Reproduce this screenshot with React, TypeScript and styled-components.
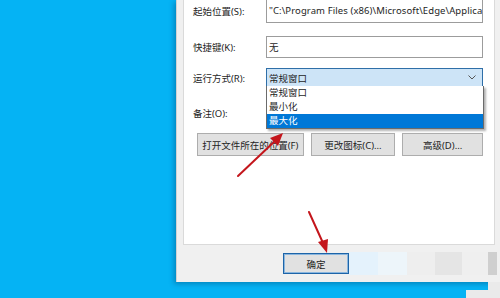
import React from 'react';
import styled, { createGlobalStyle } from 'styled-components';

// Ausschnitt eines Windows-Eigenschaften-Dialogs mit aufgeklapptem Combo

const GlobalStyle = createGlobalStyle`
  html, body { margin: 0; padding: 0; }
  body {
    font-family: "Noto Sans", "Noto Sans CJK SC", sans-serif;
    color: #1e1e1e;
  }
`;

const Desktop = styled.div`
  position: relative;
  width: 500px;
  height: 298px;
  overflow: hidden;
  background: #05b3f4;
  display: flex;
  align-items: flex-start;
`;

const Window = styled.div`
  margin-left: 176px;
  flex-shrink: 0;
  width: 330px;
  height: 282px;
  box-sizing: border-box;
  background: #f0f0f0;
  border-left: 1px solid #d2d2d2;
  box-shadow: -2px 2px 5px rgba(0, 50, 90, 0.35);
  display: flex;
  flex-direction: column;
`;

const Panel = styled.div`
  margin-left: 6px;
  width: 312px;
  height: 245px;
  box-sizing: border-box;
  background: #ffffff;
  border: 1px solid #dadada;
  border-top: none;
  padding: 0 11px 0 9px;
`;

const Form = styled.div`
  display: flex;
  flex-direction: column;
  margin-top: -2px;
`;

const Row = styled.div<{ $mt?: number }>`
  display: flex;
  align-items: center;
  margin-top: ${(p) => p.$mt ?? 0}px;
`;

const Label = styled.div`
  width: 73px;
  font-size: 9.5px;
  white-space: nowrap;
`;

const Field = styled.div<{ $h: number }>`
  position: relative;
  width: 217px;
  height: ${(p) => p.$h}px;
  box-sizing: border-box;
  border: 1px solid #9c9c9c;
  background: #fff;
  padding-left: 2px;
  display: flex;
  align-items: center;
  font-size: 9.5px;
  letter-spacing: 0.1px;
  white-space: nowrap;
  overflow: hidden;
`;

const Combo = styled.div`
  position: relative;
  width: 217px;
  height: 19px;
  box-sizing: border-box;
  border: 1px solid #2f6fa8;
  background: #cde4f7;
  padding: 0 6px 0 2px;
  display: flex;
  align-items: center;
  justify-content: space-between;
  font-size: 9.5px;
`;

const DropList = styled.div`
  position: absolute;
  top: 100%;
  left: -1px;
  width: 218px;
  box-sizing: border-box;
  border: 1px solid #6b6b6b;
  border-top: none;
  background: #fff;
  box-shadow: 2px 2px 2px rgba(0, 0, 0, 0.3);
  z-index: 2;
`;

const Option = styled.div<{ $active?: boolean }>`
  height: 14px;
  line-height: 14px;
  padding-left: 2px;
  font-size: 9.5px;
  background: ${(p) => (p.$active ? '#0078d7' : 'transparent')};
  color: ${(p) => (p.$active ? '#ffffff' : '#1e1e1e')};
`;

const ButtonRow = styled.div`
  display: flex;
  gap: 7px;
  margin-top: 9px;
  padding-left: 4px;
`;

const Button = styled.div<{ $w: number }>`
  width: ${(p) => p.$w}px;
  height: 23px;
  box-sizing: border-box;
  border: 1px solid #adadad;
  background: #e1e1e1;
  display: flex;
  align-items: center;
  justify-content: center;
  font-size: 9.5px;
  white-space: nowrap;
`;

const Footer = styled.div`
  display: flex;
  align-items: center;
  height: 37px;
  padding-left: 106px;
`;

const OkButton = styled.div`
  width: 66px;
  height: 21px;
  box-sizing: border-box;
  border: 1px solid #1d64a8;
  box-shadow: inset 0 0 0 1px #8ab6de;
  background: #e1e1e1;
  display: flex;
  align-items: center;
  justify-content: center;
  font-size: 9.5px;
`;

const Mosaic = styled.div`
  display: flex;
  height: 23px;
`;

const Patch = styled.div<{ $w: number; $c: string }>`
  width: ${(p) => p.$w}px;
  background: ${(p) => p.$c};
`;

const BehindWindow = styled.div<{ $l: number; $t: number }>`
  position: absolute;
  left: ${(p) => p.$l}px;
  top: ${(p) => p.$t}px;
  right: 0;
  bottom: 0;
  background: #eaeaea;
`;

const Annotation = styled.svg`
  position: absolute;
  left: 0;
  top: 0;
  pointer-events: none;
  z-index: 5;
`;

const Chevron = () => (
  <svg width="8" height="5" viewBox="0 0 8 5">
    <path d="M0.5 0.5 L4 4 L7.5 0.5" fill="none" stroke="#555" strokeWidth="1" />
  </svg>
);

const patches = [
  { w: 29, c: '#e4f2fc' },
  { w: 29, c: '#edf5fa' },
  { w: 28, c: '#eeeeee' },
  { w: 27, c: '#e5e5e5' },
  { w: 26, c: '#efefef' },
  { w: 9, c: '#cfcfcf' },
];

export default function App() {
  return (
    <>
      <GlobalStyle />
      <Desktop>
        <Window>
          <Panel>
            <Form>
              <Row>
                <Label>起始位置(S):</Label>
                <Field $h={25}>"C:\Program Files (x86)\Microsoft\Edge\Application"</Field>
              </Row>
              <Row $mt={13}>
                <Label>快捷键(K):</Label>
                <Field $h={22}>无</Field>
              </Row>
              <Row $mt={10}>
                <Label>运行方式(R):</Label>
                <Combo>
                  <span>常规窗口</span>
                  <Chevron />
                  <DropList>
                    <Option>常规窗口</Option>
                    <Option>最小化</Option>
                    <Option $active>最大化</Option>
                  </DropList>
                </Combo>
              </Row>
              <Row $mt={15}>
                <Label>备注(O):</Label>
                <Field $h={22} />
              </Row>
              <ButtonRow>
                <Button $w={107}>打开文件所在的位置(F)</Button>
                <Button $w={85}>更改图标(C)...</Button>
                <Button $w={81}>高级(D)...</Button>
              </ButtonRow>
            </Form>
          </Panel>
          <Footer>
            <OkButton>确定</OkButton>
            <Mosaic>
              {patches.map((p, i) => (
                <Patch key={i} $w={p.w} $c={p.c} />
              ))}
            </Mosaic>
          </Footer>
        </Window>
        <BehindWindow $l={488} $t={282} />
        <BehindWindow $l={466} $t={290} />
        <Annotation width="500" height="298" viewBox="0 0 500 298">
          <line x1="238" y1="176" x2="276" y2="140" stroke="#c4161c" strokeWidth="2" strokeLinecap="round" />
          <polygon points="283,133 270,138 278,146" fill="#c4161c" />
          <line x1="309" y1="212" x2="323" y2="243" stroke="#c4161c" strokeWidth="2" strokeLinecap="round" />
          <polygon points="327,253 318,242 328,239" fill="#c4161c" />
        </Annotation>
      </Desktop>
    </>
  );
}
